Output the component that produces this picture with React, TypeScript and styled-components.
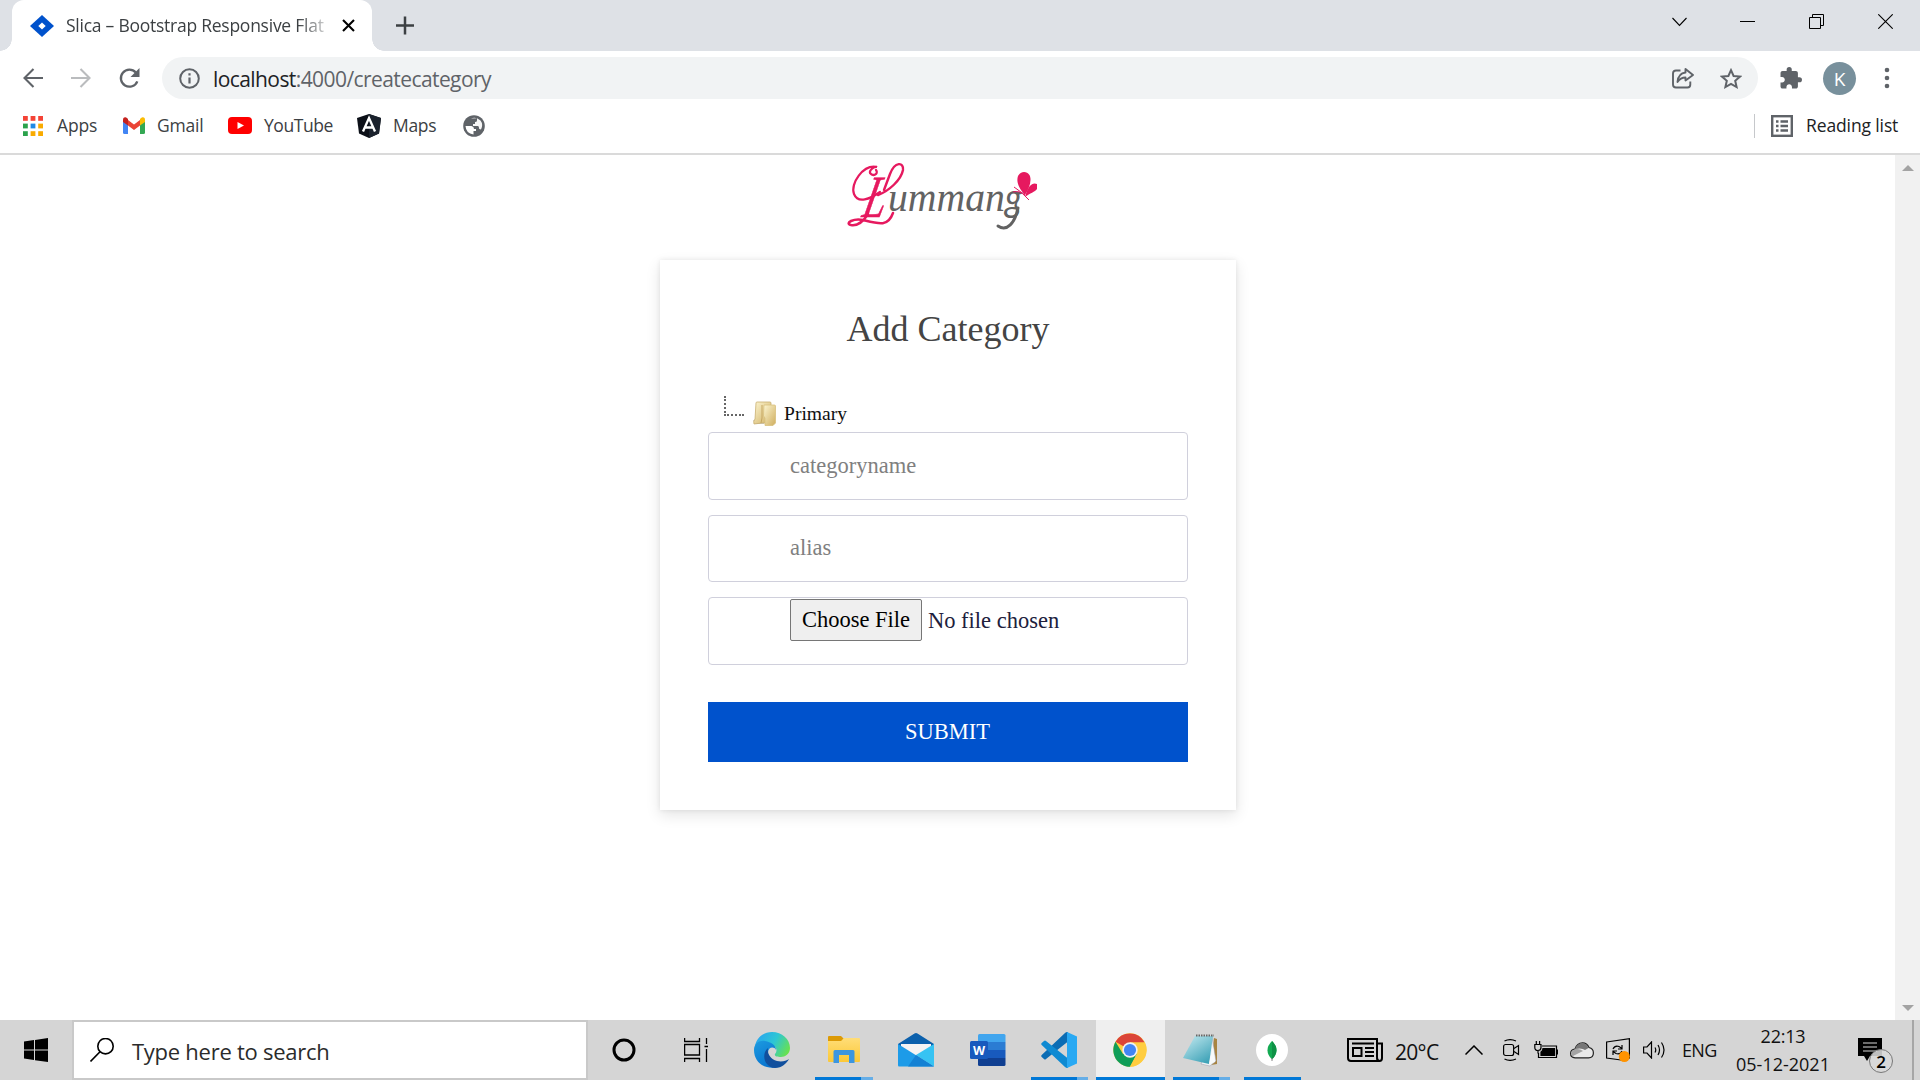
import React from "react";
import styled, { createGlobalStyle } from "styled-components";

const UI = `"Open Sans", "Noto Sans", "Liberation Sans", sans-serif`;
const SERIF = `"Liberation Serif", "Times New Roman", serif`;

const Global = createGlobalStyle`
  * { box-sizing: border-box; }
  html, body { margin: 0; padding: 0; overflow: hidden; background: #fff; }
  svg { display: block; flex: none; }
`;

const Desktop = styled.div`
  width: 1920px;
  height: 1080px;
  display: flex;
  flex-direction: column;
  background: #fff;
  font-family: ${UI};
  overflow: hidden;
`;

/* Single-line interface label with a reserved width. */
const Label = styled.span<{ $w: number; $size: number; $track?: number; $color?: string; $ml?: number; $center?: boolean; $dy?: number }>`
  flex: none;
  width: ${(p) => p.$w}px;
  margin-left: ${(p) => p.$ml ?? 0}px;
  padding-top: ${(p) => p.$dy ?? 0}px;
  font-size: ${(p) => p.$size}px;
  letter-spacing: ${(p) => p.$track ?? 0}px;
  color: ${(p) => p.$color ?? "#3c4043"};
  text-align: ${(p) => (p.$center ? "center" : "left")};
  white-space: nowrap;
  line-height: 28px;
`;

const Slot = styled.div<{ $ml?: number }>`
  flex: none;
  display: flex;
  margin-left: ${(p) => p.$ml ?? 0}px;
`;

/* ---------- browser chrome ---------- */

const TabStrip = styled.header`
  height: 51px;
  flex: none;
  display: flex;
  align-items: stretch;
  background: #dee1e6;
`;

const TabFoot = styled.div<{ $side: "left" | "right" }>`
  width: 12px;
  align-self: flex-end;
  height: 12px;
  background: radial-gradient(circle at ${(p) => (p.$side === "left" ? "0 0" : "100% 0")}, #dee1e6 11.5px, #fff 12px);
`;

const Tab = styled.div`
  width: 360px;
  display: flex;
  align-items: center;
  background: #fff;
  border-radius: 12px 12px 0 0;
  padding-left: 18px;
`;

const TabTitle = styled(Label)`
  overflow: hidden;
  margin-bottom: 2px;
  -webkit-mask-image: linear-gradient(90deg, #000 232px, transparent 268px);
  mask-image: linear-gradient(90deg, #000 232px, transparent 268px);
`;

const WindowButtons = styled.div`
  margin-left: auto;
  display: flex;
  align-items: center;
  height: 43px;
  padding-right: 27px;
`;

const Toolbar = styled.div`
  height: 53px;
  flex: none;
  display: flex;
  align-items: center;
  padding: 1px 0 0 23px;
`;

const Omnibox = styled.div`
  width: 1596px;
  height: 42px;
  margin-left: 22px;
  border-radius: 21px;
  background: #f1f3f4;
  display: flex;
  align-items: center;
  padding-left: 17px;
`;

const Host = styled.span`
  color: #202124;
`;

const Avatar = styled.div`
  width: 33px;
  height: 33px;
  margin-left: 21px;
  border-radius: 50%;
  background: #78909c;
  color: #fff;
  font: 400 19px/34px ${UI};
  text-align: center;
`;

const Bookmarks = styled.nav`
  height: 51px;
  flex: none;
  display: flex;
  align-items: center;
  padding: 0 0 6px 23px;
  border-bottom: 2px solid #dadada;
`;

const BookmarkName = styled(Label)`
  margin-bottom: 1px;
`;

const ReadingList = styled.div`
  margin-left: auto;
  display: flex;
  align-items: center;
  width: 166px;
  &::before {
    content: "";
    width: 1px;
    height: 24px;
    background: #c6c8cb;
  }
`;

/* ---------- page ---------- */

const Viewport = styled.main`
  height: 865px;
  flex: none;
  display: flex;
`;

const Page = styled.div`
  width: 1895px;
  display: flex;
  flex-direction: column;
  align-items: center;
  font-family: ${SERIF};
`;

const Scrollbar = styled.div`
  width: 25px;
  background: #f1f1f1;
  display: flex;
  flex-direction: column;
  justify-content: space-between;
  align-items: center;
  padding: 10px 0 9px;
`;

const LogoWrap = styled.div`
  height: 105px;
  width: 200px;
  margin-right: 5px;
`;

const Card = styled.form`
  width: 576px;
  height: 550px;
  margin-left: 1px;
  padding: 0 48px 48px;
  display: flex;
  flex-direction: column;
  background: #fff;
  box-shadow: 0 5px 14px rgba(0, 0, 0, 0.11), 0 0 5px rgba(0, 0, 0, 0.08);
`;

const Title = styled.h1`
  margin: 48px 0 0;
  font-weight: 400;
  font-size: 36px;
  line-height: 42px;
  text-align: center;
  color: #444;
`;

const Tree = styled.div`
  height: 82px;
  display: flex;
  align-items: flex-end;
  padding: 0 0 6px 16px;
`;

const Branch = styled.div`
  width: 20px;
  height: 20px;
  margin-bottom: 10px;
  border-left: 2px dotted #666;
  border-bottom: 2px dotted #666;
`;

const TreeName = styled.span`
  margin-left: 8px;
  font-size: 19.6px;
  line-height: 24px;
  color: #111;
`;

const Fields = styled.div`
  display: flex;
  flex-direction: column;
  gap: 15px;
`;

const fieldBox = `
  width: 100%;
  height: 67.5px;
  border: 1.25px solid #d0d0dc;
  border-radius: 4px;
  background: #fff;
`;

const TextField = styled.input`
  ${fieldBox}
  padding: 0 16px 0 81px;
  font: 400 22.5px ${SERIF};
  outline: none;
  &::placeholder {
    color: #808080;
    opacity: 1;
  }
`;

const FileField = styled.div`
  ${fieldBox}
  display: flex;
  align-items: flex-start;
  padding: 1px 0 0 81px;
  font-size: 22.5px;
  line-height: 40px;
  color: #20203c;
`;

const FileButton = styled.button`
  width: 132px;
  height: 42px;
  padding: 0 0 1px;
  border: 1px solid #767676;
  border-radius: 2px;
  background: #efefef;
  color: #000;
  font: 400 22.5px/38px ${SERIF};
  white-space: nowrap;
`;

const FileStatus = styled.span`
  margin-left: 6px;
  padding-top: 2px;
`;

const Submit = styled.button`
  height: 60px;
  flex: none;
  margin-top: auto;
  padding: 0 1px 1px 0;
  border: 0;
  background: #0052cc;
  color: #fff;
  font: 400 22.5px ${SERIF};
`;

/* ---------- taskbar ---------- */

const Taskbar = styled.footer`
  height: 60px;
  flex: none;
  display: flex;
  align-items: center;
  background: #d5d5d5;
`;

const Search = styled.div`
  width: 516px;
  height: 60px;
  margin-left: 24px;
  border: 2px solid #c9c9c9;
  background: #fff;
  display: flex;
  align-items: center;
  padding-left: 16px;
`;

const AppButton = styled.div<{ $w: number; $ml: number; $active?: boolean; $run?: "one" | "many"; $nudge?: number }>`
  flex: none;
  width: ${(p) => p.$w}px;
  height: 60px;
  margin-left: ${(p) => p.$ml}px;
  padding-right: ${(p) => p.$nudge ?? 0}px;
  display: flex;
  align-items: center;
  justify-content: center;
  background-color: ${(p) => (p.$active ? "#efefef" : "transparent")};
  background-image: ${(p) =>
    p.$run === "many"
      ? "linear-gradient(90deg, #0078d7 46px, #66aee7 46px)"
      : p.$run === "one"
      ? "linear-gradient(#0078d7, #0078d7)"
      : "none"};
  background-repeat: no-repeat;
  background-size: 100% 3px;
  background-position: bottom;
`;

const Clock = styled.div`
  width: 100px;
  margin-left: 13px;
  display: flex;
  flex-direction: column;
  align-items: center;
`;

const Notice = styled.div`
  position: relative;
  margin-left: 25px;
  width: 36px;
  height: 24px;
`;

const NoticeCount = styled.span`
  position: absolute;
  left: 11px;
  top: 11px;
  width: 24px;
  height: 24px;
  border: 1px solid #777;
  border-radius: 50%;
  background: rgba(218, 218, 218, 0.88);
  font-size: 17px;
  font-weight: 600;
  line-height: 23px;
  text-align: center;
  color: #000;
`;

const ShowDesktop = styled.div`
  width: 8px;
  height: 60px;
  margin-left: auto;
  border-left: 2px solid #a6a6a6;
`;

/* ---------- drawings ---------- */

const Lummang = () => (
  <svg width="200" height="105" viewBox="845 155 200 105">
    <g fill="none" stroke="#e6195f" strokeLinecap="round">
      <path d="M876 170C879 174 873 177 870 173C869 170 875 166 877 167C863 164 850 184 854 194C858 204 870 199 880 192" strokeWidth="2.2" />
      <path d="M878 195C889 191 901 180 903 170C904 162 895 161 890 174L884 190" strokeWidth="2.4" />
      <path d="M868 214C863 222 857 226 851 225C844 223 854 218 863 220C879 224 888 227 893 213" strokeWidth="2.5" />
    </g>
    <text transform="translate(861 217) skewX(-13)" fontFamily={SERIF} fontStyle="italic" fontSize="60" fill="#e6195f" stroke="#e6195f" strokeWidth=".6" textLength="22" lengthAdjust="spacingAndGlyphs">L</text>
    <text x="888" y="211" fill="#626262" fontStyle="italic" fontFamily={SERIF} fontSize="43" textLength="134" lengthAdjust="spacingAndGlyphs">
      umman<tspan fontFamily="Lato, sans-serif" fontSize="38">g</tspan>
    </text>
    <path d="M1018 208C1015 223 1007 232 998 226" fill="none" stroke="#626262" strokeWidth="3" strokeLinecap="round" />
    <path d="M1025 195C1015 185 1015 173 1024 172C1034 173 1031 186 1025 195Z" fill="#e6195f" />
    <path d="M1025 197C1028 185 1033 182 1037 184V189C1035 192 1030 193 1025 197Z" fill="#e6195f" />
    <path d="M1014 187L1025 195M1013 192Q1020 190 1025 196L1029 200" fill="none" stroke="#e6195f" strokeWidth="1" />
  </svg>
);

const Favicon = () => (
  <svg width="24" height="22" viewBox="0 0 24 22">
    <path d="M12 0L24 11L12 22L0 11Z" fill="#0052cc" />
    <path d="M12 7.500L15.700 11L12 14.500L8.300 11Z" fill="#fff" />
  </svg>
);

const Back = ({ color, flip }: { color: string; flip?: boolean }) => (
  <svg width="20" height="20" viewBox="0 0 20 20" fill="none" stroke={color} strokeWidth="2.1">
    <path d={flip ? "M0 10H18M9.5 1L18.5 10L9.5 19" : "M20 10H2M10.5 1L1.5 10L10.5 19"} />
  </svg>
);

const Reload = () => (
  <svg width="21" height="21" viewBox="0 0 21 21">
    <path d="M18.3 13.3A8.5 8.5 0 1 1 16.8 4.6" fill="none" stroke="#5f6368" strokeWidth="2.3" />
    <path d="M20.5 0V9H11.5Z" fill="#5f6368" />
  </svg>
);

const Info = () => (
  <svg width="21" height="21" viewBox="0 0 21 21" fill="none" stroke="#5f6368" strokeWidth="2">
    <circle cx="10.5" cy="10.5" r="9.3" />
    <path d="M10.5 9.5V15.5M10.5 5.3V7.6" strokeWidth="2.2" />
  </svg>
);

const Share = () => (
  <svg width="22" height="21" viewBox="0 0 22 21" fill="none" stroke="#5f6368" strokeWidth="1.9" strokeLinejoin="round">
    <path d="M8.5 2.5H4Q1 2.5 1 5.5V16.5Q1 19.5 4 19.5H15.5Q18.3 19.5 18.3 16.5V13.5" />
    <path d="M13.5 1L21 7L13.5 12.5V9.5C9.5 9.5 7.5 11 5.5 14C6 8.5 8.5 5 13.5 4.5Z" />
  </svg>
);

const Star = () => (
  <svg width="22" height="21" viewBox="0 0 22 21" fill="none" stroke="#5f6368" strokeWidth="2">
    <path d="M11 2.200L13.600 8L20 8.600L15.200 12.800L16.600 19L11 15.800L5.400 19L6.800 12.800L2 8.600L8.400 8Z" />
  </svg>
);

const Puzzle = () => (
  <svg width="22" height="22" viewBox="1.5 1 21.5 21.5" fill="#5f6368">
    <path d="M20.5 11H19V7c0-1.1-.9-2-2-2h-4V3.500a2.500 2.500 0 0 0-5 0V5H4c-1.100 0-1.990.9-1.990 2v3.800H3.500c1.490 0 2.700 1.210 2.700 2.700s-1.210 2.700-2.700 2.700H2V20c0 1.100.9 2 2 2h3.800v-1.500c0-1.490 1.210-2.700 2.700-2.700s2.700 1.210 2.700 2.700V22H17c1.100 0 2-.9 2-2v-4h1.500a2.500 2.500 0 0 0 0-5z" />
  </svg>
);

const Dots = () => (
  <svg width="6" height="22" viewBox="0 0 6 22" fill="#5f6368">
    <circle cx="3" cy="3" r="2.3" />
    <circle cx="3" cy="11" r="2.3" />
    <circle cx="3" cy="19" r="2.3" />
  </svg>
);

const APP_COLORS = ["#f44336", "#f44336", "#f44336", "#2ba24c", "#1e88e5", "#f9ab00", "#2ba24c", "#f9ab00", "#f9ab00"];
const Apps = () => (
  <svg width="20" height="20" viewBox="0 0 20 20">
    {APP_COLORS.map((c, i) => (
      <rect key={i} x={(i % 3) * 7.6} y={Math.floor(i / 3) * 7.6} width="4.8" height="4.8" fill={c} />
    ))}
  </svg>
);

const Gmail = () => (
  <svg width="22" height="17" viewBox="0 0 22 17">
    <path d="M0 3V15.500Q0 17 1.500 17H5V7Z" fill="#4285f4" />
    <path d="M22 3V15.500Q22 17 20.500 17H17V7Z" fill="#34a853" />
    <path d="M5 3L11 7.500L17 3V8.500L11 13L5 8.500Z" fill="#ea4335" />
    <path d="M0 3Q0 0 2.500 .3Q3.500 .6 5 2V8.500L0 5Z" fill="#c5221f" />
    <path d="M22 3Q22 0 19.500 .3Q18.500 .6 17 2V8.500L22 5Z" fill="#fbbc04" />
  </svg>
);

const YouTube = () => (
  <svg width="24" height="17" viewBox="0 0 24 17">
    <rect width="24" height="17" rx="4" fill="#f00" />
    <path d="M9.500 5L16 8.500L9.500 12Z" fill="#fff" />
  </svg>
);

const AngularMark = () => (
  <svg width="24" height="24" viewBox="0 0 24 24">
    <path d="M12 0L24 4L22 19.500L12 24L2 19.500L0 4Z" fill="#0c1018" />
    <path d="M12 0L24 4L22 19.500L12 24Z" fill="#1b222d" />
    <path d="M6 17.500L12 4L18 17.500M8.500 13.500H15.500" fill="none" stroke="#fff" strokeWidth="2.3" />
  </svg>
);

const Globe = () => (
  <svg width="22" height="22" viewBox="0 0 22 22">
    <circle cx="11" cy="11" r="10.800" fill="#5f6368" />
    <path d="M2.500 11L8.500 11Q11 11.500 11 14H13V16H10.500V19.500Q3 18.500 2.500 11Z" fill="#fff" />
    <path d="M8 3.500Q11 2 14 3.200V5.500Q14 7 12 7V9H10V11H15Q16 11 16.200 14L18 14.500Q20.500 9.500 17.500 5.500L14 3.200Z" fill="#fff" fillOpacity=".95" />
  </svg>
);

const ListIcon = () => (
  <svg width="22" height="22" viewBox="0 0 22 22" fill="none" stroke="#5f6368" strokeWidth="2.400">
    <rect x="1.200" y="1.200" width="19.600" height="19.600" />
    <path d="M5 6.500H7.500M5 11H7.500M5 15.500H7.500M9.500 6.500H17M9.500 11H17M9.500 15.500H17" />
  </svg>
);

const Stroke = ({ w, h, d, sw = 1.1 }: { w: number; h: number; d: string; sw?: number }) => (
  <svg width={w} height={h} viewBox={`0 0 ${w} ${h}`} fill="none" stroke="#000" strokeWidth={sw}>
    <path d={d} />
  </svg>
);

const Folder = () => (
  <svg width="24" height="25" viewBox="0 0 24 25">
    <defs>
      <linearGradient id="fold" x1="0" y1="0" x2="1" y2="1">
        <stop offset="0" stopColor="#fdf6d2" />
        <stop offset="1" stopColor="#cfae5f" />
      </linearGradient>
    </defs>
    <path d="M1 19L3 23H12V20Z" fill="#999" opacity=".5" />
    <path d="M4 2Q4 1 5 1H18Q19 1 19 2V22H10L2 23Q1 20 3 18Z" fill="url(#fold)" stroke="#c9ae70" strokeWidth=".8" />
    <path d="M10 4V17L9 22" stroke="#c5a661" fill="none" />
    <path d="M12 4H22.500Q23.500 4 23.500 5V22L21 24.500H13V17L11.500 15Z" fill="url(#fold)" stroke="#d8c07e" strokeWidth=".8" />
  </svg>
);

const WindowsLogo = () => (
  <svg width="24" height="24" viewBox="0 0 24 24" fill="#000">
    <path d="M0 3.500L10 2V11.500H0ZM11 1.900L24 0V11.500H11ZM0 12.500H10V22L0 20.600ZM11 12.500H24V24L11 22.200Z" />
  </svg>
);

const Magnifier = () => (
  <svg width="24" height="24" viewBox="0 0 24 24" fill="none" stroke="#000" strokeWidth="1.600">
    <circle cx="15.500" cy="8.200" r="7.700" />
    <path d="M10 13.700L.5 23.500" />
  </svg>
);

const Cortana = () => (
  <svg width="24" height="24" viewBox="0 0 24 24">
    <circle cx="12" cy="12" r="10" fill="none" stroke="#000" strokeWidth="3" />
  </svg>
);

const Edge = () => (
  <svg width="36" height="36" viewBox="0 0 36 36">
    <defs>
      <linearGradient id="eTop" x1="0" y1=".3" x2="1" y2=".7">
        <stop offset="0" stopColor="#28a6ee" />
        <stop offset=".5" stopColor="#2dc6d5" />
        <stop offset="1" stopColor="#6be24a" />
      </linearGradient>
      <linearGradient id="eBot" x1="0" y1="0" x2=".6" y2="1">
        <stop offset="0" stopColor="#1d9be0" />
        <stop offset="1" stopColor="#0671ce" />
      </linearGradient>
    </defs>
    <path d="M1 14C3 5 10 0 18 0C28 0 36 7 36 16C36 22 31 25 27 25C23 25 20 24 21 22C23 20 24 14 17 14L8 9Z" fill="url(#eTop)" />
    <path d="M0 18C0 11 6 8 11 9C17 10 22 13 22 18C20 14 14 15 14 21C14 29 22 33 27 34C15 39 0 33 0 18Z" fill="url(#eBot)" />
    <path d="M14 16C7 22 10 35 21 36C28 36 33 31 35 27C32 29 28 30 23 29C16 27 13 21 14 16Z" fill="#114f9d" />
  </svg>
);

const Explorer = () => (
  <svg width="32" height="28" viewBox="0 0 32 28">
    <defs>
      <linearGradient id="exp" x1="0" y1="0" x2="0" y2="1">
        <stop offset="0" stopColor="#ffdd78" />
        <stop offset="1" stopColor="#fbc837" />
      </linearGradient>
    </defs>
    <path d="M0 1Q0 0 1 0H13L16 3V6H0Z" fill="#dc9a06" />
    <path d="M0 5H13L16 2H31Q32 2 32 3V25Q32 26 31 26H1Q0 26 0 25Z" fill="url(#exp)" />
    <path d="M5.500 27V15.500Q5.500 14 7 14H25Q26.500 14 26.500 15.500V27H21V19H11V27Z" fill="#3c96e0" />
  </svg>
);

const Mail = () => (
  <svg width="36" height="34" viewBox="0 0 36 34">
    <path d="M0 11L16.500 .5Q18 -.5 19.500 .5L36 11V14H0Z" fill="#0b60ac" />
    <path d="M3 11H33V14L18 23L3 14Z" fill="#f3f3f3" />
    <path d="M0 11L36 33.500H1Q0 33.500 0 32Z" fill="#1d9be8" />
    <path d="M36 11V33.500L18 22Z" fill="#36c3f3" />
    <path d="M18 22L36 33.500H10Z" fill="#1381d4" />
  </svg>
);

const Word = () => (
  <svg width="36" height="33" viewBox="0 0 36 33">
    <path d="M8 1.500Q8 0 9.500 0H34Q35.500 0 35.500 1.500V8H8Z" fill="#41a5ee" />
    <path d="M8 8H35.500V16H8Z" fill="#2b7cd3" />
    <path d="M8 16H35.500V24H8Z" fill="#185abd" />
    <path d="M8 24H35.500V30.500Q35.500 32 34 32H9.500Q8 32 8 30.500Z" fill="#103f91" />
    <rect x="0" y="7" width="18" height="18" rx="1.500" fill="#185abd" />
    <text x="9" y="20.500" fontFamily={UI} fontSize="12.500" fontWeight="700" fill="#fff" textAnchor="middle">W</text>
  </svg>
);

const VSCode = () => (
  <svg width="36" height="36" viewBox="0 0 36 36">
    <path d="M27 0V9.500L5 27Q4 28 3 27L.7 25Q-.3 24 .7 23L24 1Q25.500 -.2 27 0Z" fill="#0b6cb4" />
    <path d="M27 36V26.500L5 9Q4 8 3 9L.7 11Q-.3 12 .7 13L24 35Q25.500 36.200 27 36Z" fill="#0f8ad2" />
    <path d="M26 0L36 4.500V31.500L26 36Z" fill="#29a9f3" />
  </svg>
);

const ChromeLogo = () => (
  <svg width="34" height="34" viewBox="0 0 34 34">
    <circle cx="17" cy="17" r="16.700" fill="#ffcd40" />
    <path d="M17 17L2.500 8.700A16.700 16.700 0 0 1 31.500 9.300H17Z" fill="#db4437" />
    <path d="M2.500 8.700A16.700 16.700 0 0 0 17 33.700L24 21L17 17L10 21Z" fill="#0f9d58" />
    <path d="M17 33.700L23.700 21L31.500 9.300A16.700 16.700 0 0 1 17 33.700Z" fill="#ffcd40" />
    <circle cx="17" cy="17" r="7.700" fill="#f1f1f1" />
    <circle cx="17" cy="17" r="6.100" fill="#4285f4" />
  </svg>
);

const Notepad = () => (
  <svg width="36" height="33" viewBox="0 0 36 33">
    <defs>
      <linearGradient id="note" x1="0" y1="0" x2=".7" y2="1">
        <stop offset="0" stopColor="#c8ecf2" />
        <stop offset="1" stopColor="#3fa3b8" />
      </linearGradient>
    </defs>
    <path d="M31 4L34 5V30L28 31Z" fill="#a88440" />
    <path d="M29 3L33 27L27 32L18 30Z" fill="#eef2f3" stroke="#99a" strokeWidth=".5" />
    <path d="M12 2H30L26 30L0 24Z" fill="url(#note)" />
    <path d="M26 30L30 12L32 28Z" fill="#f7fafa" />
    <path d="M13 1.500H31" stroke="#666" strokeWidth="2" strokeDasharray="1.500 1" />
  </svg>
);

const Mongo = () => (
  <svg width="32" height="32" viewBox="0 0 32 32">
    <circle cx="16" cy="16" r="16" fill="#fff" />
    <path d="M16 7Q25 16 16 25.500Q7 16 16 7Z" fill="#13aa52" />
    <path d="M16 7Q25 16 16 25.500Z" fill="#0f9146" />
    <path d="M16 24V27" stroke="#888" />
  </svg>
);

const News = () => (
  <svg width="36" height="24" viewBox="0 0 36 24" fill="none" stroke="#000" strokeWidth="2">
    <path d="M1 1H30V19Q30 23 33 23H4Q1 23 1 20ZM30 5.500H35V20Q35 23 32.500 23Q30 23 30 20" />
    <path d="M5 5.500H27M18 10H27M18 14H27M18 18H27M6 10H14.500V18H6Z" />
  </svg>
);

const MeetNow = () => (
  <svg width="17" height="22" viewBox="0 0 17 22" fill="none" stroke="#000" strokeWidth="1.200">
    <rect x=".6" y="5.500" width="10" height="11" rx="2" />
    <path d="M11 9.500L15.500 6.500V15.500L11 12.500M1.500 2Q7 -.8 13 2M1.500 20Q7 22.800 13 20" />
  </svg>
);

const Battery = () => (
  <svg width="24" height="18" viewBox="0 0 24 18" fill="none" stroke="#000" strokeWidth="1.200">
    <path d="M8 5H22.500V16.500H4.500V12" />
    <path d="M9 7.500H20.500V14.500H7V11Q9 10 9 7.500Z" fill="#000" />
    <path d="M23.500 8.500V13.500" strokeWidth="1" />
    <path d="M.8 3.500H7V6.500Q7 9.500 4 9.500Q.8 9.500 .8 6.500ZM2.300 3.500V0M5.600 3.500V0M4 9.500V12.500" />
  </svg>
);

const Cloud = () => (
  <svg width="24" height="17" viewBox="0 0 24 17">
    <path d="M5 15.800Q.6 15.500 .6 11.500Q.6 7.500 5 7Q7 .8 12.500 .8Q17 .8 19 5.500Q23.400 6.500 23.400 11Q23.400 15.800 18.500 15.800Z" fill="#e9e9e9" stroke="#222" strokeWidth="1.200" />
    <path d="M5 7Q7 1.300 12.500 1.300Q17 1.300 18.500 6L15 8Q12 5.500 5 7Z" fill="#777" />
    <path d="M1.200 11.500Q1.500 8 6 7Q10 6.500 13 9L2.500 14.200Q1.200 13 1.200 11.500Z" fill="#a3a3a3" />
  </svg>
);

const Update = () => (
  <svg width="24" height="25" viewBox="0 0 24 25" fill="none" stroke="#000" strokeWidth="1.200">
    <path d="M.6 4L23.400 .7V20L15 22L.6 20Z" />
    <path d="M7 11Q9 7 13 8.500L16 10.500M16 7V11H12M16 13Q14 17 10 15.500L7 13.500M7 17V13H11" />
    <circle cx="18.300" cy="18.500" r="5.500" fill="#ff9300" stroke="none" />
  </svg>
);

const Speaker = () => (
  <svg width="23" height="18" viewBox="0 0 23 18" fill="none" stroke="#000" strokeWidth="1.200">
    <path d="M.6 6H4L8.500 1V17L4 12H.6Z" />
    <path d="M12 6.500Q13.500 9 12 11.500M15 4Q18 9 15 14M18.500 1.500Q23.500 9 18.500 16.500" />
  </svg>
);

const Bubble = () => (
  <svg width="24" height="23" viewBox="0 0 24 23">
    <path d="M0 0H24V18H12L9 23L6 18H0Z" fill="#000" />
    <path d="M5 5H19M5 9H19M5 13H19" stroke="#d5d5d5" strokeWidth="1.200" />
  </svg>
);

export default function App() {
  return (
    <Desktop>
      <Global />
      <TabStrip>
        <TabFoot $side="left" />
        <Tab>
          <Favicon />
          <TabTitle $w={262} $ml={12} $size={17.5} $track={-0.25}>Slica – Bootstrap Responsive Flat</TabTitle>
          <Slot $ml={14}><Stroke w={13} h={13} sw={2.1} d="M1 1L12 12M12 1L1 12" /></Slot>
        </Tab>
        <TabFoot $side="right" />
        <Slot $ml={12}>
          <svg width="18" height="51" viewBox="0 0 18 51" stroke="#3c4043" strokeWidth="2.5"><path d="M0 25.500H18M9 16.500V34.500" /></svg>
        </Slot>
        <WindowButtons>
          <Stroke w={15} h={10} d="M.5 1L7.500 8.500L14.500 1" />
          <Slot $ml={53}><Stroke w={15} h={1} d="M0 .5H15" /></Slot>
          <Slot $ml={54}><Stroke w={15} h={15} sw={1} d="M.5 3.500H11.500V14.500H.5ZM3.500 3.500V.5H14.500V11.500H11.500" /></Slot>
          <Slot $ml={54}><Stroke w={15} h={15} d="M.3 .3L14.700 14.700M14.700 .3L.3 14.700" /></Slot>
        </WindowButtons>
      </TabStrip>

      <Toolbar>
        <Back color="#5f6368" />
        <Slot $ml={28}><Back color="#babcbe" flip /></Slot>
        <Slot $ml={28}><Reload /></Slot>
        <Omnibox>
          <Info />
          <Label $w={300} $ml={13} $size={21} $track={-0.58} $color="#5f6368" $dy={1}><Host>localhost</Host>:4000/createcategory</Label>
          <Slot $ml={1159}><Share /></Slot>
          <Slot $ml={26}><Star /></Slot>
        </Omnibox>
        <Slot $ml={22}><Puzzle /></Slot>
        <Avatar>K</Avatar>
        <Slot $ml={28}><Dots /></Slot>
      </Toolbar>

      <Bookmarks>
        <Apps />
        <BookmarkName $w={66} $ml={14} $size={17.5} $track={-0.15}>Apps</BookmarkName>
        <Gmail />
        <BookmarkName $w={71} $ml={12} $size={17.5} $track={-0.2}>Gmail</BookmarkName>
        <YouTube />
        <BookmarkName $w={93} $ml={12} $size={17.5} $track={-0.45}>YouTube</BookmarkName>
        <AngularMark />
        <BookmarkName $w={70} $ml={12} $size={17.5} $track={-0.3}>Maps</BookmarkName>
        <Globe />
        <ReadingList>
          <Slot $ml={16}><ListIcon /></Slot>
          <BookmarkName $w={100} $ml={13} $size={17.5} $track={-0.12} $color="#202124">Reading list</BookmarkName>
        </ReadingList>
      </Bookmarks>

      <Viewport>
        <Page>
          <LogoWrap><Lummang /></LogoWrap>
          <Card onSubmit={(e) => e.preventDefault()}>
            <Title>Add Category</Title>
            <Tree>
              <Branch />
              <Slot $ml={8}><Folder /></Slot>
              <TreeName>Primary</TreeName>
            </Tree>
            <Fields>
              <TextField placeholder="categoryname" />
              <TextField placeholder="alias" />
              <FileField>
                <FileButton type="button">Choose File</FileButton>
                <FileStatus>No file chosen</FileStatus>
              </FileField>
            </Fields>
            <Submit>SUBMIT</Submit>
          </Card>
        </Page>
        <Scrollbar>
          <svg width="12" height="6" viewBox="0 0 12 6" fill="#a3a3a3"><path d="M6 0L12 6H0Z" /></svg>
          <svg width="12" height="6" viewBox="0 0 12 6" fill="#a3a3a3"><path d="M6 6L12 0H0Z" /></svg>
        </Scrollbar>
      </Viewport>

      <Taskbar>
        <Slot $ml={24}><WindowsLogo /></Slot>
        <Search>
          <Magnifier />
          <Label $w={240} $ml={18} $size={22} $track={-0.26} $color="#2b2b2b" $dy={2}>Type here to search</Label>
        </Search>
        <AppButton $w={58} $ml={7}><Cortana /></AppButton>
        <AppButton $w={58} $ml={14}>
          <Stroke w={24} h={24} sw={1.3} d="M.6 0V3.500H15.500V0M.6 6.500H15.500V17H.6ZM.6 24V20.500H15.500V24M22.500 0V6M22.500 11V24M20.500 8.500H24" />
        </AppButton>
        <AppButton $w={58} $ml={18}><Edge /></AppButton>
        <AppButton $w={58} $ml={14} $run="many"><Explorer /></AppButton>
        <AppButton $w={58} $ml={14}><Mail /></AppButton>
        <AppButton $w={58} $ml={14}><Word /></AppButton>
        <AppButton $w={57} $ml={14} $run="many" $nudge={2}><VSCode /></AppButton>
        <AppButton $w={69} $ml={8} $active $run="one" $nudge={2}><ChromeLogo /></AppButton>
        <AppButton $w={57} $ml={8} $run="many" $nudge={2}><Notepad /></AppButton>
        <AppButton $w={57} $ml={14} $run="one" $nudge={2}><Mongo /></AppButton>
        <Slot $ml={46}><News /></Slot>
        <Label $w={60} $ml={12} $size={21} $track={-0.7} $color="#111" $dy={3}>20°C</Label>
        <Slot $ml={10}><Stroke w={18} h={10} sw={1.5} d="M.5 9.500L9 1L17.500 9.500" /></Slot>
        <Slot $ml={20}><MeetNow /></Slot>
        <Slot $ml={14}><Battery /></Slot>
        <Slot $ml={12}><Cloud /></Slot>
        <Slot $ml={12}><Update /></Slot>
        <Slot $ml={13}><Speaker /></Slot>
        <Label $w={38} $ml={16} $size={18} $track={-0.7} $color="#111">ENG</Label>
        <Clock>
          <Label $w={100} $size={18} $track={-0.2} $color="#111" $center>22:13</Label>
          <Label $w={100} $size={18} $track={0} $color="#111" $center>05-12-2021</Label>
        </Clock>
        <Notice>
          <Bubble />
          <NoticeCount>2</NoticeCount>
        </Notice>
        <ShowDesktop />
      </Taskbar>
    </Desktop>
  );
}
